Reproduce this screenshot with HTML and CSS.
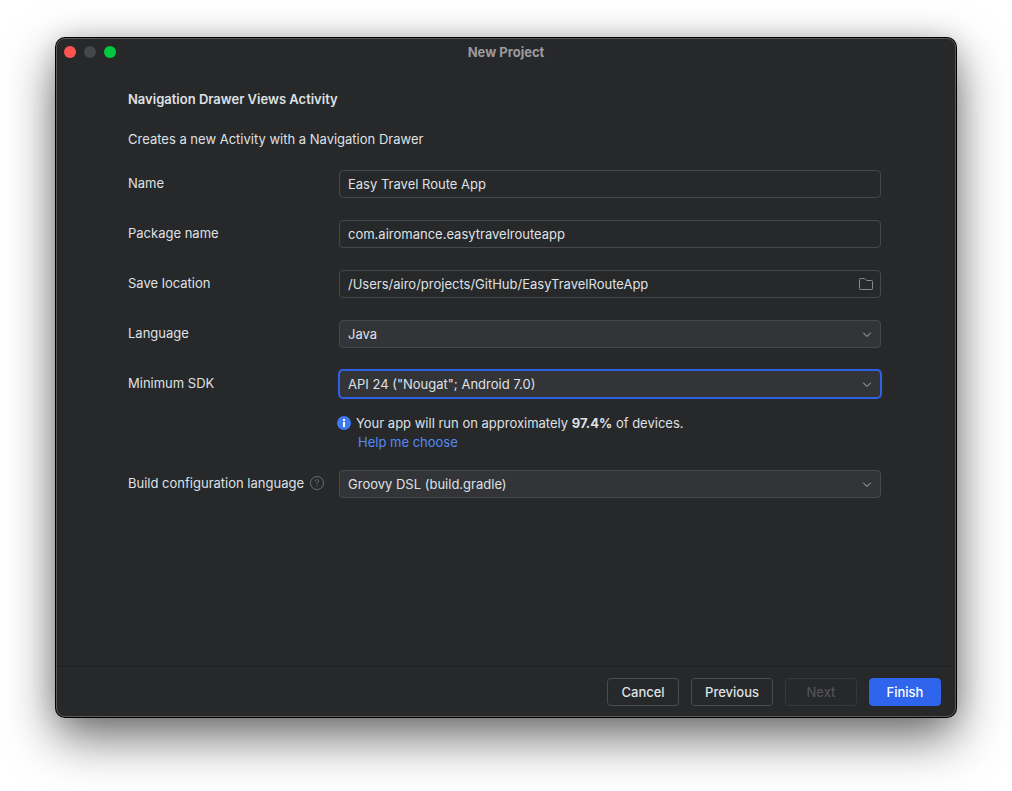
FILE: index.html
```html
<!DOCTYPE html>
<html lang="en">
<head>
<meta charset="utf-8">
<title>New Project</title>
<link rel="stylesheet" href="styles.css">
</head>
<body>
<div class="window">
  <header class="titlebar">
    <div class="lights">
      <button class="light light-close" type="button" aria-label="Close"></button>
      <button class="light light-minimize" type="button" aria-label="Minimize" disabled></button>
      <button class="light light-zoom" type="button" aria-label="Zoom"></button>
    </div>
    <h1 class="title">New Project</h1>
  </header>
  <form class="form" id="project">
    <h2 class="heading">Navigation Drawer Views Activity</h2>
    <p class="description">Creates a new Activity with a Navigation Drawer</p>
    <div class="row">
      <label class="label" for="name">Name</label>
      <div class="field"><input class="control" id="name" type="text" value="Easy Travel Route App"></div>
    </div>
    <div class="row">
      <label class="label" for="package">Package name</label>
      <div class="field"><input class="control" id="package" type="text" value="com.airomance.easytravelrouteapp" spellcheck="false"></div>
    </div>
    <div class="row">
      <label class="label" for="location">Save location</label>
      <div class="field">
        <input class="control" id="location" type="text" value="/Users/airo/projects/GitHub/EasyTravelRouteApp" spellcheck="false">
        <button class="browse" type="button" aria-label="Browse">
          <svg width="16" height="16" viewBox="0 0 16 16" fill="none" stroke="#868a91"><path d="M1.500 3.500a1 1 0 0 1 1-1h3.600a1 1 0 0 1 .6.2L8.600 4.500h4.900a1 1 0 0 1 1 1v7a1 1 0 0 1-1 1h-11a1 1 0 0 1-1-1z"/></svg>
        </button>
      </div>
    </div>
    <div class="row">
      <label class="label" for="language">Language</label>
      <div class="field">
        <select class="control select" id="language"><option>Java</option><option>Kotlin</option></select>
        <svg class="chevron" width="16" height="16" viewBox="0 0 16 16" fill="none" stroke="#b4b8bf" stroke-linecap="round"><path d="M4.500 7 8 10.500 11.500 7"/></svg>
      </div>
    </div>
    <div class="row row-helped">
      <label class="label" for="sdk">Minimum SDK</label>
      <div>
        <div class="field">
          <select class="control select active" id="sdk"><option>API 24 ("Nougat"; Android 7.0)</option></select>
          <svg class="chevron" width="16" height="16" viewBox="0 0 16 16" fill="none" stroke="#b4b8bf" stroke-linecap="round"><path d="M4.500 7 8 10.500 11.500 7"/></svg>
        </div>
        <div class="help">
          <svg class="info" width="14" height="14" viewBox="0 0 14 14"><circle cx="7" cy="7" r="7" fill="#3f78f0"/><path d="M6 3h2v2H6zM6 6h2v5H6z" fill="#fff"/></svg>
          <p class="estimate">Your app will run on approximately <b>97.4%</b> of devices.</p>
          <a class="link" href="#help">Help me choose</a>
        </div>
      </div>
    </div>
    <div class="row">
      <div class="label label-hinted">
        <label for="build">Build configuration language</label>
        <svg width="14" height="14" viewBox="0 0 14 14" fill="none" stroke="#6c6f75"><circle cx="7" cy="7" r="6.500"/><path d="M5.200 5.500C5.200 4.300 6 3.700 7 3.700s1.800.6 1.800 1.600c0 1.300-1.800 1.300-1.800 2.700"/><path d="M7 9.300v1.200"/></svg>
      </div>
      <div class="field">
        <select class="control select" id="build"><option>Groovy DSL (build.gradle)</option></select>
        <svg class="chevron" width="16" height="16" viewBox="0 0 16 16" fill="none" stroke="#b4b8bf" stroke-linecap="round"><path d="M4.500 7 8 10.500 11.500 7"/></svg>
      </div>
    </div>
  </form>
  <footer class="footer">
    <button class="button" type="button">Cancel</button>
    <button class="button" type="button">Previous</button>
    <button class="button" type="button" disabled>Next</button>
    <button class="button primary" type="submit" form="project">Finish</button>
  </footer>
</div>
</body>
</html>
```
FILE: styles.css
```css
* {
  box-sizing: border-box;
}

body {
  margin: 0;
  min-height: 100vh;
  padding: 38px 56px 74px;
  display: flex;
  background: #fff;
  color: #dfe1e5;
  font: 13px/20px Inter, "Liberation Sans", sans-serif;
}

input,
select,
button {
  margin: 0;
  font: inherit;
  color: inherit;
}

.window {
  flex: 1;
  min-width: 0;
  display: flex;
  flex-direction: column;
  border: 1px solid #58595b;
  border-radius: 9px;
  background: #27282a;
  box-shadow: 0 0 0 1px #000, 0 20px 50px rgba(0, 0, 0, 0.58), 0 0 24px rgba(0, 0, 0, 0.15);
}

.titlebar {
  display: grid;
  grid-template-columns: 1fr auto 1fr;
  align-items: center;
  height: 26px;
  padding: 0 7px;
}

.lights {
  display: flex;
  gap: 8px;
}

.light {
  width: 12px;
  height: 12px;
  padding: 0;
  border: 0;
  border-radius: 50%;
}

.light-close {
  background: #ff5450;
}

.light-minimize {
  background: #464749;
}

.light-zoom {
  background: #00c840;
}

.title {
  margin: 0;
  font-size: 13px;
  line-height: 18px;
  font-weight: 700;
  color: #9a9b9d;
}

.form {
  flex: 1;
  padding: 24px 74px 24px 71px;
}

.heading {
  margin: 0 0 20px;
  font-size: 13px;
  font-weight: 600;
}

.description {
  margin: 0 0 21px;
}

.row {
  display: grid;
  grid-template-columns: 211px 1fr;
  align-items: start;
  margin-bottom: 22px;
}

.row-helped {
  margin-bottom: 18px;
}

.label {
  line-height: 26px;
}

.label-hinted {
  display: flex;
  align-items: center;
  gap: 6px;
}

.field {
  position: relative;
}

.control {
  display: block;
  width: 100%;
  height: 28px;
  padding: 0 32px 1px 8px;
  border: 1px solid #46484d;
  border-radius: 4px;
  background: #27282a;
  outline: 0;
}

.select {
  appearance: none;
  padding-bottom: 0;
  background: #333438;
}

.control:focus,
.active {
  border-color: #2e63e8;
  box-shadow: 0 0 0 1px #2e63e8;
}

.chevron {
  position: absolute;
  top: 6px;
  right: 6px;
  pointer-events: none;
}

.browse {
  position: absolute;
  top: 6px;
  right: 7px;
  width: 16px;
  height: 16px;
  padding: 0;
  border: 0;
  background: none;
}

.browse svg {
  display: block;
}

.help {
  display: grid;
  grid-template-columns: 14px 1fr;
  column-gap: 5px;
  align-items: center;
  margin: 16px 0 0 -2px;
  line-height: 19px;
}

.info {
  align-self: start;
  margin-top: 2px;
}

.estimate {
  margin: 0;
}

.link {
  grid-column: 2;
  justify-self: start;
  padding-left: 2px;
  color: #548af7;
  text-decoration: none;
}

.footer {
  display: flex;
  justify-content: flex-end;
  gap: 12px;
  padding: 11px 14px 10px;
  border-top: 1px solid #1e1f21;
}

.button {
  min-width: 72px;
  height: 28px;
  padding: 0 13px;
  border: 1px solid #4a4c50;
  border-radius: 4px;
  background: #27282a;
  font-weight: 500;
}

.button:disabled {
  border-color: #37383b;
  color: #505257;
}

.primary {
  border-color: #2f65ec;
  background: #2f65ec;
  color: #fff;
}
```
